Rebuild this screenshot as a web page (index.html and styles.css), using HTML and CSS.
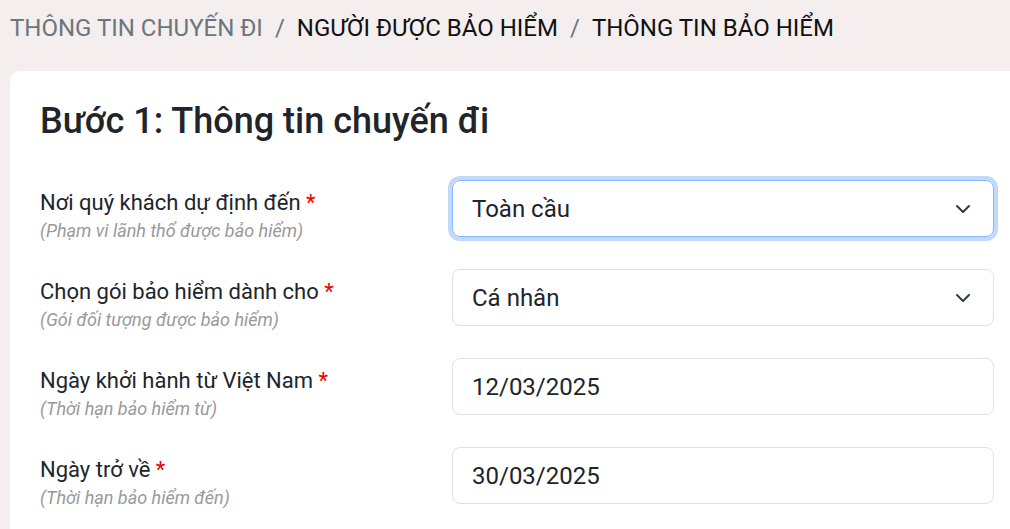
FILE: index.html
```html
<!DOCTYPE html>
<html lang="vi">
<head>
<meta charset="utf-8">
<title>Thông tin chuyến đi</title>
<link rel="stylesheet" href="styles.css">
</head>
<body>
<nav class="crumbs">
  <span class="crumb muted">THÔNG TIN CHUYẾN ĐI</span>
  <span class="sep">/</span>
  <span class="crumb">NGƯỜI ĐƯỢC BẢO HIỂM</span>
  <span class="sep">/</span>
  <span class="crumb">THÔNG TIN BẢO HIỂM</span>
</nav>
<main class="card">
  <h1 class="title">Bước 1: Thông tin chuyến đi</h1>
  <div class="form">
    <div class="row">
      <div class="label">
        <div class="main">Nơi quý khách dự định đến <span class="req">*</span></div>
        <div class="hint">(Phạm vi lãnh thổ được bảo hiểm)</div>
      </div>
      <div class="field focus">
        <span class="value">Toàn cầu</span>
        <svg class="chev" viewBox="0 0 16 16" width="16" height="16"><path d="M2 5l6 6 6-6" fill="none" stroke="#343a40" stroke-width="2" stroke-linecap="round" stroke-linejoin="round"/></svg>
      </div>
    </div>
    <div class="row">
      <div class="label">
        <div class="main">Chọn gói bảo hiểm dành cho <span class="req">*</span></div>
        <div class="hint">(Gói đối tượng được bảo hiểm)</div>
      </div>
      <div class="field">
        <span class="value">Cá nhân</span>
        <svg class="chev" viewBox="0 0 16 16" width="16" height="16"><path d="M2 5l6 6 6-6" fill="none" stroke="#343a40" stroke-width="2" stroke-linecap="round" stroke-linejoin="round"/></svg>
      </div>
    </div>
    <div class="row">
      <div class="label">
        <div class="main">Ngày khởi hành từ Việt Nam <span class="req">*</span></div>
        <div class="hint">(Thời hạn bảo hiểm từ)</div>
      </div>
      <div class="field">
        <span class="value">12/03/2025</span>
      </div>
    </div>
    <div class="row">
      <div class="label">
        <div class="main">Ngày trở về <span class="req">*</span></div>
        <div class="hint">(Thời hạn bảo hiểm đến)</div>
      </div>
      <div class="field">
        <span class="value">30/03/2025</span>
      </div>
    </div>
  </div>
</main>
</body>
</html>
```

FILE: styles.css
```css
html, body {
  margin: 0;
  padding: 0;
  overflow: hidden;
}
body {
  background: #f4eeee;
  font-family: Roboto, "Noto Sans", sans-serif;
  color: #212529;
  width: 1010px;
  height: 529px;
}
.crumbs {
  display: flex;
  align-items: flex-start;
  gap: 12px;
  padding: 13px 10px 0;
  height: 58px;
  box-sizing: border-box;
  font-size: 24px;
  line-height: 30px;
  color: #111;
}
.crumb.muted {
  color: #6c757d;
}
.sep {
  color: #6c757d;
}
.card {
  margin: 13px 0 0 10px;
  width: 1014px;
  background: #fff;
  border-radius: 10px;
  padding: 28px 30px 40px;
  box-sizing: border-box;
}
.title {
  margin: 0 0 37px;
  font-size: 36px;
  font-weight: 500;
  line-height: 44px;
}
.form {
  display: flex;
  flex-direction: column;
  gap: 25px;
}
.row {
  display: grid;
  grid-template-columns: 412px 542px;
  align-items: start;
}
.label {
  padding-top: 8px;
}
.label .main {
  font-size: 22px;
  line-height: 30px;
}
.req {
  color: #e00;
}
.hint {
  font-size: 18px;
  font-style: italic;
  color: #999;
  line-height: 26px;
}
.field {
  height: 57px;
  box-sizing: border-box;
  border: 1px solid #dee2e6;
  border-radius: 8px;
  display: flex;
  align-items: center;
  justify-content: space-between;
  padding: 0 22px 0 19px;
  font-size: 24px;
}
.field.focus {
  border-color: #86b7fe;
  box-shadow: 0 0 0 4px #c2d9fd;
}
.chev {
  flex: none;
}
```
